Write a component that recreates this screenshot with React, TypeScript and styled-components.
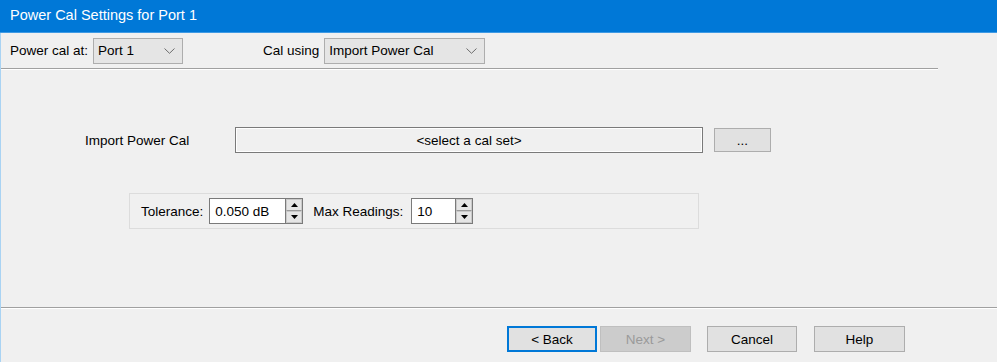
import React from "react";
import styled, { createGlobalStyle } from "styled-components";

const GlobalStyles = createGlobalStyle`
  html, body {
    margin: 0;
    padding: 0;
    background: #f0f0f0;
  }
  body {
    font-family: "Liberation Sans", Arial, sans-serif;
    font-size: 13.5px;
    color: #000;
  }
`;

function Chevron() {
  return (
    <svg width="11" height="6" viewBox="0 0 11 6">
      <polyline points="0.5,0.5 5.5,5.3 10.5,0.5" fill="none" stroke="#6d6d6d" strokeWidth="1" />
    </svg>
  );
}

function Combo({ value, width }: { value: string; width: number }) {
  return (
    <ComboBox $width={width}>
      <span>{value}</span>
      <Chevron />
    </ComboBox>
  );
}

function SpinInput({ value, width }: { value: string; width: number }) {
  return (
    <SpinBox $width={width}>
      <SpinText>{value}</SpinText>
      <SpinButtons>
        <SpinButton>
          <svg width="7" height="4" viewBox="0 0 7 4">
            <polygon points="3.5,0 7,4 0,4" fill="#000" />
          </svg>
        </SpinButton>
        <SpinButton>
          <svg width="7" height="4" viewBox="0 0 7 4">
            <polygon points="0,0 7,0 3.5,4" fill="#000" />
          </svg>
        </SpinButton>
      </SpinButtons>
    </SpinBox>
  );
}

function App() {
  return (
    <>
      <GlobalStyles />
      <Window>
        <TitleBar>Power Cal Settings for Port 1</TitleBar>
        <Body>
          <TopRow>
            <Label>Power cal at:</Label>
            <Combo value="Port 1" width={90} />
            <Label $left={80}>Cal using</Label>
            <Combo value="Import Power Cal" width={161} />
          </TopRow>
          <TopSeparator />
          <Content>
            <ImportRow>
              <ImportLabel>Import Power Cal</ImportLabel>
              <CalSetBox>&lt;select a cal set&gt;</CalSetBox>
              <DialogButton $width={57} $height={24}>...</DialogButton>
            </ImportRow>
            <GroupBox>
              <Label $right={6}>Tolerance:</Label>
              <SpinInput value="0.050 dB" width={94} />
              <Label $left={9} $right={8}>Max Readings:</Label>
              <SpinInput value="10" width={62} />
            </GroupBox>
          </Content>
          <BottomSeparator />
          <Footer>
            <DialogButton $width={90} $default>&lt; Back</DialogButton>
            <DialogButton $width={91} $gap={3} $disabled>Next &gt;</DialogButton>
            <DialogButton $width={90} $gap={16}>Cancel</DialogButton>
            <DialogButton $width={91} $gap={17}>Help</DialogButton>
          </Footer>
        </Body>
      </Window>
    </>
  );
}

export default App;

const Window = styled.div`
  width: 997px;
  height: 362px;
  display: flex;
  flex-direction: column;
  overflow: hidden;
`;

const TitleBar = styled.div`
  height: 33px;
  flex: none;
  background: #0078d7;
  color: #fff;
  font-size: 14.5px;
  display: flex;
  align-items: center;
  padding: 0 0 2px 10px;
  box-sizing: border-box;
  border-bottom: 1px solid #3f9ae4;
`;

const Body = styled.div`
  flex: 1;
  display: flex;
  flex-direction: column;
  background: #f0f0f0;
  border-left: 1px solid #a9d3f3;
`;

const TopRow = styled.div`
  height: 35px;
  display: flex;
  align-items: center;
  padding-left: 9px;
`;

const Label = styled.span<{ $left?: number; $right?: number }>`
  margin-left: ${({ $left }) => $left ?? 0}px;
  margin-right: ${({ $right }) => $right ?? 5}px;
  white-space: nowrap;
`;

const ComboBox = styled.div<{ $width: number }>`
  width: ${({ $width }) => $width}px;
  height: 26px;
  box-sizing: border-box;
  background: #e5e5e5;
  border: 1px solid #adadad;
  display: flex;
  align-items: center;
  justify-content: space-between;
  padding: 0 7px 0 4px;
`;

const TopSeparator = styled.div`
  width: 937px;
  height: 1px;
  background: #a0a0a0;
  border-bottom: 1px solid #fff;
`;

const Content = styled.div`
  flex: 1;
  display: flex;
  flex-direction: column;
  padding-top: 57px;
`;

const ImportRow = styled.div`
  display: flex;
  align-items: center;
  height: 26px;
  padding-left: 84px;
`;

const ImportLabel = styled.span`
  width: 150px;
`;

const CalSetBox = styled.div`
  width: 468px;
  height: 26px;
  box-sizing: border-box;
  border: 1px solid #7a7a7a;
  box-shadow: inset 0 0 0 1px #fff;
  background: #f0f0f0;
  display: flex;
  align-items: center;
  justify-content: center;
  margin-right: 11px;
`;

const DialogButton = styled.div<{
  $width: number;
  $height?: number;
  $default?: boolean;
  $disabled?: boolean;
  $gap?: number;
}>`
  width: ${({ $width }) => $width}px;
  height: ${({ $height }) => $height ?? 26}px;
  margin-left: ${({ $gap }) => $gap ?? 0}px;
  box-sizing: border-box;
  display: flex;
  align-items: center;
  justify-content: center;
  background: ${({ $disabled }) => ($disabled ? "#cccccc" : "#e1e1e1")};
  color: ${({ $disabled }) => ($disabled ? "#9a9a9a" : "#000")};
  border: 1px solid
    ${({ $default, $disabled }) => ($default ? "#0078d7" : $disabled ? "#bfbfbf" : "#adadad")};
  box-shadow: ${({ $default }) => ($default ? "inset 0 0 0 1px #0078d7" : "none")};
`;

const GroupBox = styled.div`
  margin: 40px 0 0 128px;
  width: 570px;
  height: 36px;
  box-sizing: border-box;
  border: 1px solid #dcdcdc;
  display: flex;
  align-items: center;
  padding-left: 11px;
`;

const SpinBox = styled.div<{ $width: number }>`
  width: ${({ $width }) => $width}px;
  height: 26px;
  box-sizing: border-box;
  border: 1px solid #7a7a7a;
  background: #fff;
  display: flex;
  margin-right: 1px;
`;

const SpinText = styled.span`
  flex: 1;
  display: flex;
  align-items: center;
  padding-left: 5px;
`;

const SpinButtons = styled.div`
  width: 16px;
  display: flex;
  flex-direction: column;
  border-left: 1px solid #7a7a7a;
  background: #e5e5e5;
`;

const SpinButton = styled.div`
  flex: 1;
  display: flex;
  align-items: center;
  justify-content: center;
  border: 1px solid #c9c9c9;
  &:first-child {
    border-bottom: 1px solid #9a9a9a;
  }
`;

const BottomSeparator = styled.div`
  height: 1px;
  background: #a0a0a0;
  border-bottom: 1px solid #fff;
`;

const Footer = styled.div`
  height: 53px;
  display: flex;
  align-items: flex-start;
  padding: 17px 0 0 506px;
  box-sizing: border-box;
`;
